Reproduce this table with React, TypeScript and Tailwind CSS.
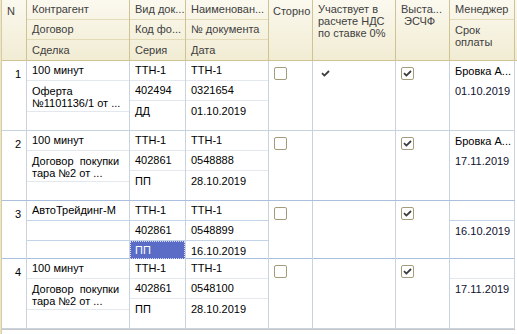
import type { ReactNode } from "react";

type Doc = {
  n: number;
  kontr: string;
  dogovor?: string[];
  vid: string;
  kod: string;
  seria: string;
  name: string;
  num: string;
  date: string;
  storno: boolean;
  nds: boolean;
  escf: boolean;
  manager: string;
  srok: string;
  current?: boolean;
};

const DOCS: Doc[] = [
  {
    n: 1,
    kontr: "100 минут",
    dogovor: ["Оферта", "№1101136/1 от ..."],
    vid: "ТТН-1",
    kod: "402494",
    seria: "ДД",
    name: "ТТН-1",
    num: "0321654",
    date: "01.10.2019",
    storno: false,
    nds: true,
    escf: true,
    manager: "Бровка А...",
    srok: "01.10.2019",
  },
  {
    n: 2,
    kontr: "100 минут",
    dogovor: ["Договор  покупки", "тара №2 от ..."],
    vid: "ТТН-1",
    kod: "402861",
    seria: "ПП",
    name: "ТТН-1",
    num: "0548888",
    date: "28.10.2019",
    storno: false,
    nds: false,
    escf: true,
    manager: "Бровка А...",
    srok: "17.11.2019",
  },
  {
    n: 3,
    kontr: "АвтоТрейдинг-М",
    vid: "ТТН-1",
    kod: "402861",
    seria: "ПП",
    name: "ТТН-1",
    num: "0548899",
    date: "16.10.2019",
    storno: false,
    nds: false,
    escf: true,
    manager: "",
    srok: "16.10.2019",
    current: true,
  },
  {
    n: 4,
    kontr: "100 минут",
    dogovor: ["Договор  покупки", "тара №2 от ..."],
    vid: "ТТН-1",
    kod: "402861",
    seria: "ПП",
    name: "ТТН-1",
    num: "0548100",
    date: "28.10.2019",
    storno: false,
    nds: false,
    escf: true,
    manager: "",
    srok: "17.11.2019",
  },
];

// column widths include the 1px right border of each cell
const GRID =
  "grid grid-cols-[25px_103px_56px_83px_44px_83px_54px_65px]";

function Check() {
  return (
    <svg width="9" height="7" viewBox="0 0 9 7" className="block">
      <path
        d="M1 3.2 L3.4 5.6 L8 1"
        fill="none"
        stroke="#3a3a3a"
        strokeWidth="1.8"
      />
    </svg>
  );
}

function Box({ checked }: { checked: boolean }) {
  return (
    <div className="ml-[5px] mt-[6px] flex h-[13px] w-[13px] items-center justify-center rounded-[2px] border border-[#a39c7c] bg-white">
      {checked && <Check />}
    </div>
  );
}

function HeadCell({
  children,
  className = "",
}: {
  children: ReactNode;
  className?: string;
}) {
  return (
    <div
      className={`flex h-[20px] items-center truncate border-b border-[#e3dab8] px-[5px] ${className}`}
    >
      {children}
    </div>
  );
}

function Line({
  children,
  last,
  tint,
  className = "",
}: {
  children?: ReactNode;
  last?: boolean;
  tint?: boolean;
  className?: string;
}) {
  return (
    <div
      className={`flex h-[20px] items-center whitespace-pre px-[5px] ${
        last ? "" : tint ? "border-b border-[#c4d4e8]" : "border-b border-[#e3e8ee]"
      } ${className}`}
    >
      {children}
    </div>
  );
}

function DocRow({ d }: { d: Doc }) {
  const rowBorder = d.current || d.n === 2 ? "border-[#aac0dc]" : "border-[#c9d3de]";
  const cell = "border-r border-[#c9d3de]";
  return (
    <div
      className={`${GRID} border-b ${rowBorder} ${d.current ? "h-[58px]" : "h-[70px]"}`}
    >
      <div className={`${cell} pr-[5px] pt-[5px] text-right`}>{d.n}</div>

      <div className={cell}>
        <Line tint={d.current}>{d.kontr}</Line>
        {d.dogovor ? (
          <div className="h-[31px] whitespace-pre border-b border-[#e3e8ee] px-[5px] pt-[4px] leading-[12px]">
            {d.dogovor.join("\n")}
          </div>
        ) : (
          <Line tint={d.current} />
        )}
      </div>

      <div className={cell}>
        <Line tint={d.current}>{d.vid}</Line>
        <Line tint={d.current}>{d.kod}</Line>
        {d.current ? (
          <div className="flex h-[18px] items-center border border-dotted border-[#d8dcf4] bg-[#5a6cc6] px-[4px] text-white">
            {d.seria}
          </div>
        ) : (
          <Line last>{d.seria}</Line>
        )}
      </div>

      <div className={cell}>
        <Line tint={d.current}>{d.name}</Line>
        <Line tint={d.current}>{d.num}</Line>
        <Line last>{d.date}</Line>
      </div>

      <div className={cell}>
        <Box checked={d.storno} />
      </div>

      <div className={cell}>
        {d.nds && (
          <div className="ml-[8px] mt-[9px]">
            <Check />
          </div>
        )}
      </div>

      <div className={cell}>
        <Box checked={d.escf} />
      </div>

      <div className={cell}>
        {d.manager ? (
          <Line last>{d.manager}</Line>
        ) : (
          <Line tint={d.current} />
        )}
        <Line last className="text-[#101030]">
          {d.srok}
        </Line>
      </div>
    </div>
  );
}

export default function App() {
  const head = "border-r border-[#cfc393]";
  return (
    <div
      className="h-[334px] w-[517px] overflow-hidden bg-white text-[11px] text-black"
      style={{ fontFamily: '"Liberation Sans", Arial, sans-serif' }}
    >
      <div className="flex h-full">
        <div className="w-[2px] shrink-0 border-r border-[#d6cca4] bg-[#ece5c8]" />
        <div className="flex-1">
          {/* header */}
          <div className="flex border-b border-[#cfc393] bg-gradient-to-b from-[#fbf9ef] to-[#f1ecd3] text-[#404040]">
            <div className={`${GRID} h-[60px]`}>
              <div className={`${head} pl-[5px] pt-[3px]`}>N</div>
              <div className={head}>
                <HeadCell>Контрагент</HeadCell>
                <HeadCell>Договор</HeadCell>
                <HeadCell className="border-b-0">Сделка</HeadCell>
              </div>
              <div className={head}>
                <HeadCell>Вид док...</HeadCell>
                <HeadCell>Код фо...</HeadCell>
                <HeadCell className="border-b-0">Серия</HeadCell>
              </div>
              <div className={head}>
                <HeadCell>Наименован...</HeadCell>
                <HeadCell>№ документа</HeadCell>
                <HeadCell className="border-b-0">Дата</HeadCell>
              </div>
              <div className={`${head} pl-[4px] pt-[3px]`}>Сторно</div>
              <div className={`${head} pl-[5px] pt-[3px] leading-[12px]`}>
                Участвует в
                <br />
                расчете НДС
                <br />
                по ставке 0%
              </div>
              <div className={`${head} whitespace-pre pl-[5px] pt-[3px] leading-[12px]`}>
                {"Выста...\n ЭСЧФ"}
              </div>
              <div className={head}>
                <HeadCell>Менеджер</HeadCell>
                <div className="px-[5px] pt-[4px] leading-[12px]">
                  Срок
                  <br />
                  оплаты
                </div>
              </div>
            </div>
            <div className="flex-1" />
          </div>

          {/* rows */}
          <div className="flex">
            <div>
              {DOCS.map((d) => (
                <DocRow key={d.n} d={d} />
              ))}
              <div className={`${GRID} h-[5px] border-t border-[#c8c8c8]`} />
            </div>
            <div className="flex-1" />
          </div>
        </div>
      </div>
    </div>
  );
}
